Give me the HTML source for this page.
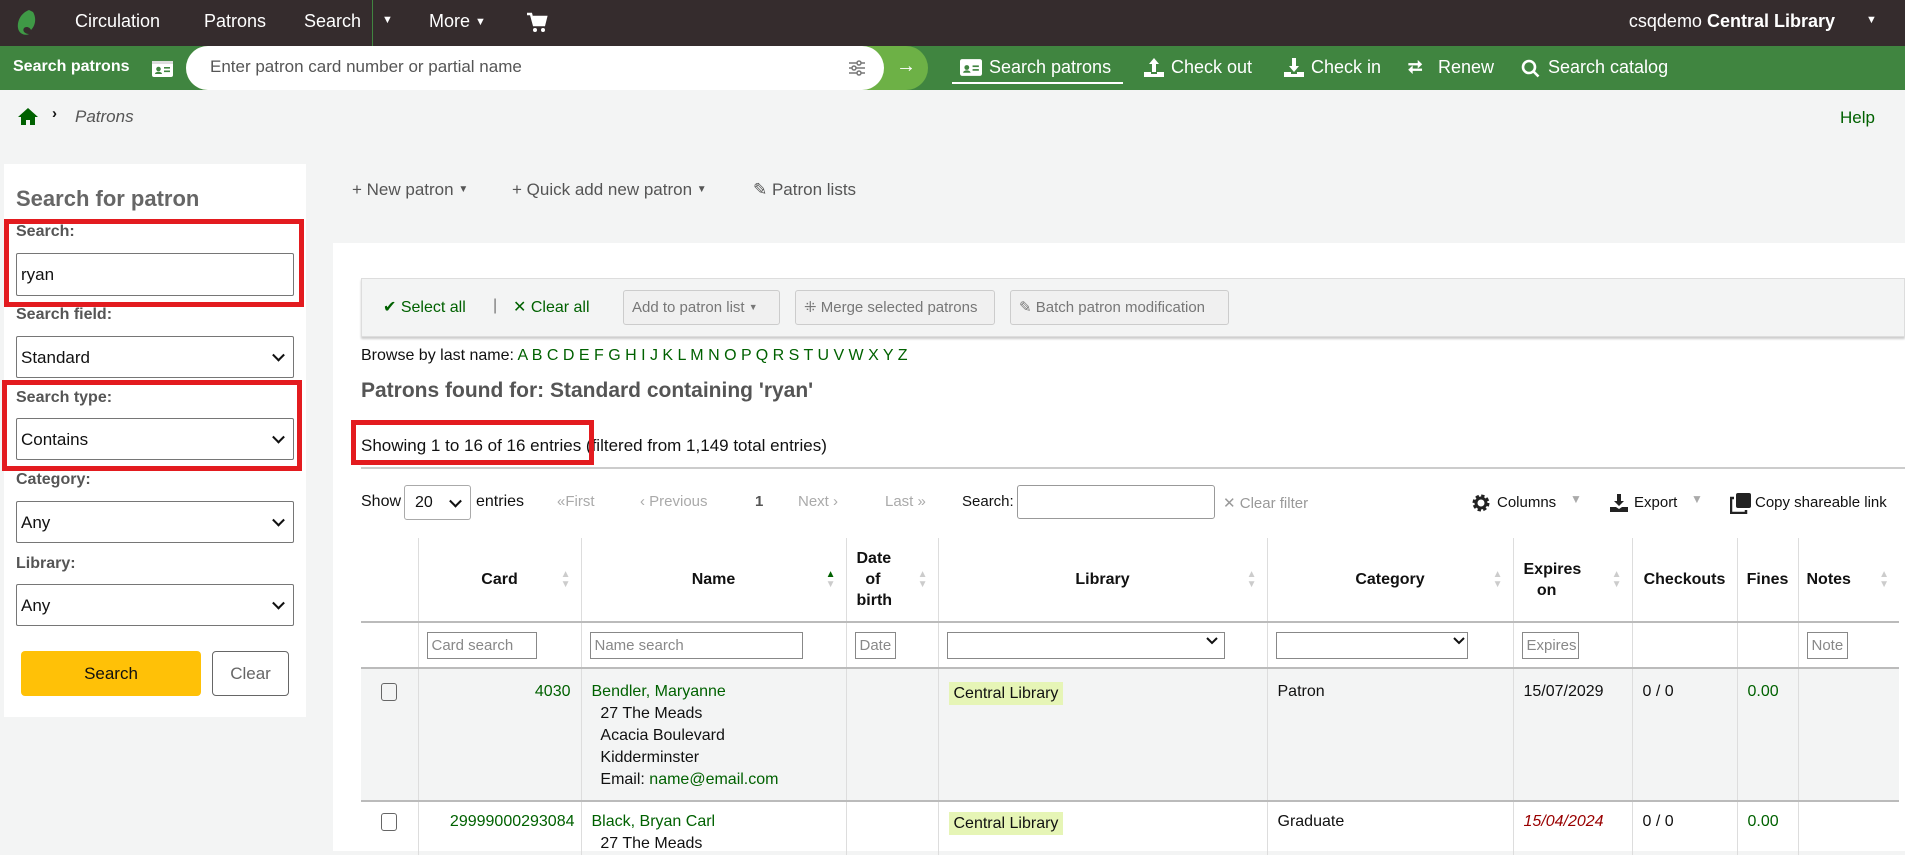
<!DOCTYPE html>
<html><head><meta charset="utf-8"><style>
*{box-sizing:border-box;margin:0;padding:0}
body{width:1905px;height:851px;overflow:hidden;background:#f3f4f4;font-family:"Liberation Sans",sans-serif;font-size:16px;color:#111;position:relative}
.a{position:absolute;white-space:nowrap}
.nav{position:absolute;left:0;top:0;width:1905px;height:46px;background:#352c2d;color:#fff;font-size:18px}
.gbar{position:absolute;left:0;top:46px;width:1905px;height:44px;background:#408540;color:#fff;font-size:18px}
.g{color:#006100}
.lbl{font-weight:bold;color:#555;font-size:16px}
.inp{position:absolute;background:#fff;border:1px solid #767676;border-radius:2px}
.sel::after{content:"";position:absolute;right:10px;top:50%;width:7px;height:7px;border-right:2px solid #111;border-bottom:2px solid #111;transform:translateY(-70%) rotate(45deg)}
.red{position:absolute;border:5px solid #e31b1f}
.btn{position:absolute;border:1px solid #ccc;border-radius:3px;background:#f0f0f0;color:#777;font-size:15px;line-height:33px;padding-left:8px}
table{position:absolute;left:361px;top:538px;border-collapse:collapse;table-layout:fixed;font-size:16px}
td,th{border-left:1px solid #ddd;vertical-align:top;padding:0 10px}
th{height:84px;vertical-align:middle;font-weight:bold;text-align:center;position:relative;border-bottom:2px solid #bbb;line-height:21px}
th .s{position:absolute;right:10px;top:50%;margin-top:-10px;color:#ccc;font-size:10px;line-height:10px}
tr.f td{height:46px;border-bottom:2px solid #bbb;vertical-align:middle}
.fi{border:1px solid #888;height:27px;color:#888;font-size:15px;line-height:25px;padding-left:4px;overflow:hidden;background:#fff}
tr.r1 td{background:#f3f4f4;height:133px;border-bottom:2px solid #bbb;padding-top:12px;line-height:22px}
tr.r2 td{padding-top:9px;height:50px;line-height:22px}
.cb{width:16px;height:18px;border:1.5px solid #666;border-radius:3px;margin:2px 0 0 0}
.lib{background:#e6f5b6;padding:3px 5px}
</style></head><body>
<div class="nav">
 <svg class="a" style="left:15px;top:9px" width="24" height="28" viewBox="0 0 24 28"><path d="M14 1C6 4 2 12 3 19c1 6 7 8 11 6-4 0-7-3-5-6 2-2 6-1 7 2 4-4 6-11 2-18z" fill="#3f9a46"/></svg>
 <span class="a" style="left:75px;top:11px">Circulation</span>
 <span class="a" style="left:204px;top:11px">Patrons</span>
 <span class="a" style="left:304px;top:11px">Search</span>
 <div class="a" style="left:372px;top:0;width:1px;height:46px;background:#408540"></div>
 <span class="a" style="left:382px;top:14px;font-size:11px">▼</span>
 <span class="a" style="left:429px;top:11px">More <span style="font-size:11px;vertical-align:2px">▼</span></span>
 <svg class="a" style="left:526px;top:12px" width="22" height="22" viewBox="0 0 22 22"><path d="M1 2h4l3 11h10l2-8H7" fill="none" stroke="#fff" stroke-width="2.5"/><rect x="7" y="5" width="12" height="8" fill="#fff"/><circle cx="9" cy="18" r="2" fill="#fff"/><circle cx="17" cy="18" r="2" fill="#fff"/></svg>
 <span class="a" style="right:70px;top:11px">csqdemo <b>Central Library</b></span>
 <span class="a" style="left:1866px;top:14px;font-size:11px">▼</span>
</div>
<div class="gbar">
 <span class="a" style="left:13px;top:12px;font-size:16px;font-weight:bold">Search patrons</span>
 <svg class="a" style="left:152px;top:15px" width="21" height="16" viewBox="0 0 21 16"><rect width="21" height="16" rx="2" fill="#fff"/><rect x="0" y="0" width="21" height="3" fill="#ddd"/><circle cx="6.5" cy="8" r="2.3" fill="#408540"/><path d="M3 13c0-3 7-3 7 0z" fill="#408540"/><rect x="12" y="6" width="6" height="1.6" fill="#408540"/><rect x="12" y="9.5" width="6" height="1.6" fill="#408540"/></svg>
 <div class="a" style="left:186px;top:0;width:742px;height:44px;background:#6db146;border-radius:22px"></div>
 <div class="a" style="left:186px;top:0;width:698px;height:44px;background:#fff;border-radius:22px"></div>
 <span class="a" style="left:210px;top:11px;color:#555;font-size:17px">Enter patron card number or partial name</span>
 <svg class="a" style="left:848px;top:13px" width="18" height="18" viewBox="0 0 18 18" stroke="#777" stroke-width="1.5" fill="#fff"><path d="M1 4h16M1 9h16M1 14h16"/><circle cx="11" cy="4" r="2"/><circle cx="6" cy="9" r="2"/><circle cx="11" cy="14" r="2"/></svg>
 <span class="a" style="left:896px;top:9px;font-size:20px;font-weight:bold">→</span>
 <svg class="a" style="left:960px;top:13px" width="22" height="17" viewBox="0 0 21 16"><rect width="21" height="16" rx="2" fill="#fff"/><circle cx="6.5" cy="8" r="2.3" fill="#408540"/><path d="M3 13c0-3 7-3 7 0z" fill="#408540"/><rect x="12" y="6" width="6" height="1.6" fill="#408540"/><rect x="12" y="9.5" width="6" height="1.6" fill="#408540"/></svg>
 <span class="a" style="left:989px;top:11px">Search patrons</span>
 <div class="a" style="left:952px;top:36px;width:171px;height:2px;background:#fff"></div>
 <svg class="a" style="left:1143px;top:12px" width="22" height="20" viewBox="0 0 22 20" fill="#fff"><path d="M11 0l5 6h-3v8h-4V6H6z"/><path d="M1 14h7v2h6v-2h7v5H1z"/></svg>
 <span class="a" style="left:1171px;top:11px">Check out</span>
 <svg class="a" style="left:1283px;top:12px" width="22" height="20" viewBox="0 0 22 20" fill="#fff"><path d="M11 14l5-6h-3V0H9v8H6z"/><path d="M1 14h7v2h6v-2h7v5H1z"/></svg>
 <span class="a" style="left:1311px;top:11px">Check in</span>
 <span class="a" style="left:1408px;top:11px;font-weight:bold">⮂</span>
 <span class="a" style="left:1438px;top:11px">Renew</span>
 <svg class="a" style="left:1521px;top:13px" width="19" height="19" viewBox="0 0 19 19" fill="none" stroke="#fff" stroke-width="2.6"><circle cx="8" cy="8" r="6"/><path d="M12.5 12.5l5 5"/></svg>
 <span class="a" style="left:1548px;top:11px">Search catalog</span>
</div>
<svg class="a" style="left:18px;top:108px" width="20" height="17" viewBox="0 0 20 17" fill="#006100"><path d="M10 0l10 9h-3v8h-5v-5H8v5H3V9H0z"/></svg>
<span class="a" style="left:52px;top:105px;font-weight:bold;font-size:15px">›</span>
<span class="a" style="left:75px;top:107px;font-style:italic;color:#555;font-size:17px">Patrons</span>
<span class="a g" style="left:1840px;top:108px;font-size:17px">Help</span>

<div class="a" style="left:4px;top:164px;width:302px;height:553px;background:#fff"></div>
<span class="a" style="left:16px;top:186px;font-size:22px;font-weight:bold;color:#666">Search for patron</span>
<span class="a lbl" style="left:16px;top:223px">Search:</span>
<div class="inp" style="left:16px;top:253px;width:278px;height:43px"><span class="a" style="left:4px;top:11px;font-size:17px">ryan</span></div>
<span class="a lbl" style="left:16px;top:306px">Search field:</span>
<div class="inp sel" style="left:16px;top:336px;width:278px;height:42px"><span class="a" style="left:4px;top:11px;font-size:17px">Standard</span></div>
<span class="a lbl" style="left:16px;top:389px">Search type:</span>
<div class="inp sel" style="left:16px;top:418px;width:278px;height:42px"><span class="a" style="left:4px;top:11px;font-size:17px">Contains</span></div>
<span class="a lbl" style="left:16px;top:471px">Category:</span>
<div class="inp sel" style="left:16px;top:501px;width:278px;height:42px"><span class="a" style="left:4px;top:11px;font-size:17px">Any</span></div>
<span class="a lbl" style="left:16px;top:555px">Library:</span>
<div class="inp sel" style="left:16px;top:584px;width:278px;height:42px"><span class="a" style="left:4px;top:11px;font-size:17px">Any</span></div>
<div class="a" style="left:21px;top:651px;width:180px;height:45px;background:#ffc107;border-radius:4px;text-align:center;line-height:45px;font-size:17px">Search</div>
<div class="a" style="left:212px;top:651px;width:77px;height:45px;border:1px solid #666;border-radius:4px;text-align:center;line-height:43px;font-size:17px;color:#666">Clear</div>
<div class="red" style="left:4px;top:219px;width:300px;height:88px"></div>
<div class="red" style="left:2px;top:380px;width:300px;height:91px"></div>

<span class="a" style="left:352px;top:180px;color:#555;font-size:17px">+ New patron <span style="font-size:10px;vertical-align:3px">▼</span></span>
<span class="a" style="left:512px;top:180px;color:#555;font-size:17px">+ Quick add new patron <span style="font-size:10px;vertical-align:3px">▼</span></span>
<span class="a" style="left:753px;top:180px;color:#555;font-size:17px">✎ Patron lists</span>

<div class="a" style="left:333px;top:243px;width:1572px;height:608px;background:#fff"></div>
<div class="a" style="left:361px;top:278px;width:1544px;height:59px;background:#f3f4f4;border:1px solid #ddd;box-shadow:0 2px 2px #ccc"></div>
<span class="a g" style="left:383px;top:297px;font-size:16px">✔ Select all</span>
<span class="a" style="left:493px;top:297px;color:#777">|</span>
<span class="a g" style="left:513px;top:297px;font-size:16px">✕ Clear all</span>
<div class="btn" style="left:623px;top:290px;width:157px;height:35px">Add to patron list <span style="font-size:9px;vertical-align:2px">▼</span></div>
<div class="btn" style="left:795px;top:290px;width:200px;height:35px">⁜ Merge selected patrons</div>
<div class="btn" style="left:1010px;top:290px;width:219px;height:35px">✎ Batch patron modification</div>

<span class="a" style="left:361px;top:347px;font-size:16px">Browse by last name: <span class="g">A B C D E F G H I J K L M N O P Q R S T U V W X Y Z</span></span>
<span class="a" style="left:361px;top:379px;font-size:21px;font-weight:bold;color:#555">Patrons found for: Standard containing 'ryan'</span>
<span class="a" style="left:361px;top:436px;font-size:17px">Showing 1 to 16 of 16 entries (filtered from 1,149 total entries)</span>
<div class="red" style="left:351px;top:420px;width:243px;height:45px"></div>
<div class="a" style="left:361px;top:467px;width:1544px;height:2px;background:#ccc"></div>

<span class="a" style="left:361px;top:493px;font-size:16px">Show</span>
<div class="inp sel" style="left:404px;top:485px;width:67px;height:35px;border-color:#aaa;border-radius:3px"><span class="a" style="left:10px;top:8px">20</span></div>
<span class="a" style="left:476px;top:493px">entries</span>
<span class="a" style="left:557px;top:493px;color:#aaa;font-size:15px">«First</span>
<span class="a" style="left:640px;top:493px;color:#aaa;font-size:15px">‹ Previous</span>
<span class="a" style="left:755px;top:493px;font-weight:bold;color:#555;font-size:15px">1</span>
<span class="a" style="left:798px;top:493px;color:#aaa;font-size:15px">Next ›</span>
<span class="a" style="left:885px;top:493px;color:#aaa;font-size:15px">Last »</span>
<span class="a" style="left:962px;top:493px;font-size:15px">Search:</span>
<div class="inp" style="left:1017px;top:485px;width:198px;height:34px;border-color:#999;border-radius:3px"></div>
<span class="a" style="left:1223px;top:494px;color:#999;font-size:15px">✕ Clear filter</span>
<svg class="a" style="left:1472px;top:494px" width="18" height="18" viewBox="0 0 18 18"><circle cx="9" cy="9" r="6.5" fill="none" stroke="#222" stroke-width="4" stroke-dasharray="3 2.1"/><circle cx="9" cy="9" r="5" fill="none" stroke="#222" stroke-width="3"/></svg>
<span class="a" style="left:1497px;top:494px;font-size:15px">Columns</span>
<span class="a" style="left:1570px;top:492px;color:#aaa;font-size:12px">▼</span>
<svg class="a" style="left:1609px;top:493px" width="20" height="20" viewBox="0 0 20 20" fill="#222"><path d="M10 13l5-5h-3V1H8v7H5z"/><path d="M1 14h6l3 2 3-2h6v5H1z"/></svg>
<span class="a" style="left:1634px;top:494px;font-size:15px">Export</span>
<span class="a" style="left:1691px;top:492px;color:#aaa;font-size:12px">▼</span>
<svg class="a" style="left:1730px;top:493px" width="21" height="21" viewBox="0 0 21 21"><rect x="6" y="0" width="15" height="15" rx="2" fill="#222"/><path d="M4 5H1v15h15v-3" fill="none" stroke="#222" stroke-width="2.5"/></svg>
<span class="a" style="left:1755px;top:494px;font-size:15px">Copy shareable link</span>

<table>
<colgroup><col style="width:57px"><col style="width:163px"><col style="width:265px"><col style="width:92px"><col style="width:329px"><col style="width:246px"><col style="width:119px"><col style="width:105px"><col style="width:61px"><col style="width:101px"></colgroup>
<tr><th style="border-left:none"></th><th>Card<span class="s">▲<br>▼</span></th><th>Name<span class="s"><span style="color:#006100">▲</span><br>▼</span></th><th style="text-align:left">Date<br>&nbsp;&nbsp;of<br>birth<span class="s">▲<br>▼</span></th><th>Library<span class="s">▲<br>▼</span></th><th>Category<span class="s">▲<br>▼</span></th><th style="text-align:left">Expires<br>&nbsp;&nbsp;&nbsp;on<span class="s">▲<br>▼</span></th><th style="padding:0 4px">Checkouts</th><th style="padding:0 4px">Fines</th><th style="text-align:left;padding-left:8px">Notes<span class="s">▲<br>▼</span></th></tr>
<tr class="f"><td style="border-left:none"></td><td style="padding:0 8px"><div class="fi" style="width:110px">Card search</div></td><td style="padding:0 8px"><div class="fi" style="width:213px">Name search</div></td><td style="padding:0 8px"><div class="fi" style="width:41px">Date</div></td><td style="padding:0 8px"><div class="fi" style="height:27px;position:relative;width:278px"></div></td><td style="padding:0 8px"><div class="fi" style="width:192px"></div></td><td style="padding:0 8px"><div class="fi" style="width:57px">Expires</div></td><td></td><td></td><td style="padding:0 8px"><div class="fi" style="width:41px">Note</div></td></tr>
<tr class="r1"><td style="border-left:none;padding-left:20px"><div class="cb"></div></td><td class="g" style="text-align:right">4030</td><td><span class="g">Bendler, Maryanne</span><br>&nbsp;&nbsp;27 The Meads<br>&nbsp;&nbsp;Acacia Boulevard<br>&nbsp;&nbsp;Kidderminster<br>&nbsp;&nbsp;Email: <span class="g">name@email.com</span></td><td></td><td style="padding-top:14px"><span class="lib">Central Library</span></td><td>Patron</td><td>15/07/2029</td><td>0 / 0</td><td class="g">0.00</td><td></td></tr>
<tr class="r2"><td style="border-left:none;padding-left:20px"><div class="cb"></div></td><td class="g" style="text-align:right;padding:9px 6px 0 0">29999000293084</td><td><span class="g">Black, Bryan Carl</span><br>&nbsp;&nbsp;27 The Meads</td><td></td><td style="padding-top:11px"><span class="lib">Central Library</span></td><td>Graduate</td><td style="color:#900;font-style:italic">15/04/2024</td><td>0 / 0</td><td class="g">0.00</td><td></td></tr>
</table>
<svg class="a" style="left:1206px;top:637px" width="12" height="8" viewBox="0 0 12 8"><path d="M1 1l5 5 5-5" fill="none" stroke="#111" stroke-width="2"/></svg>
<svg class="a" style="left:1453px;top:637px" width="12" height="8" viewBox="0 0 12 8"><path d="M1 1l5 5 5-5" fill="none" stroke="#111" stroke-width="2"/></svg>
</body></html>
